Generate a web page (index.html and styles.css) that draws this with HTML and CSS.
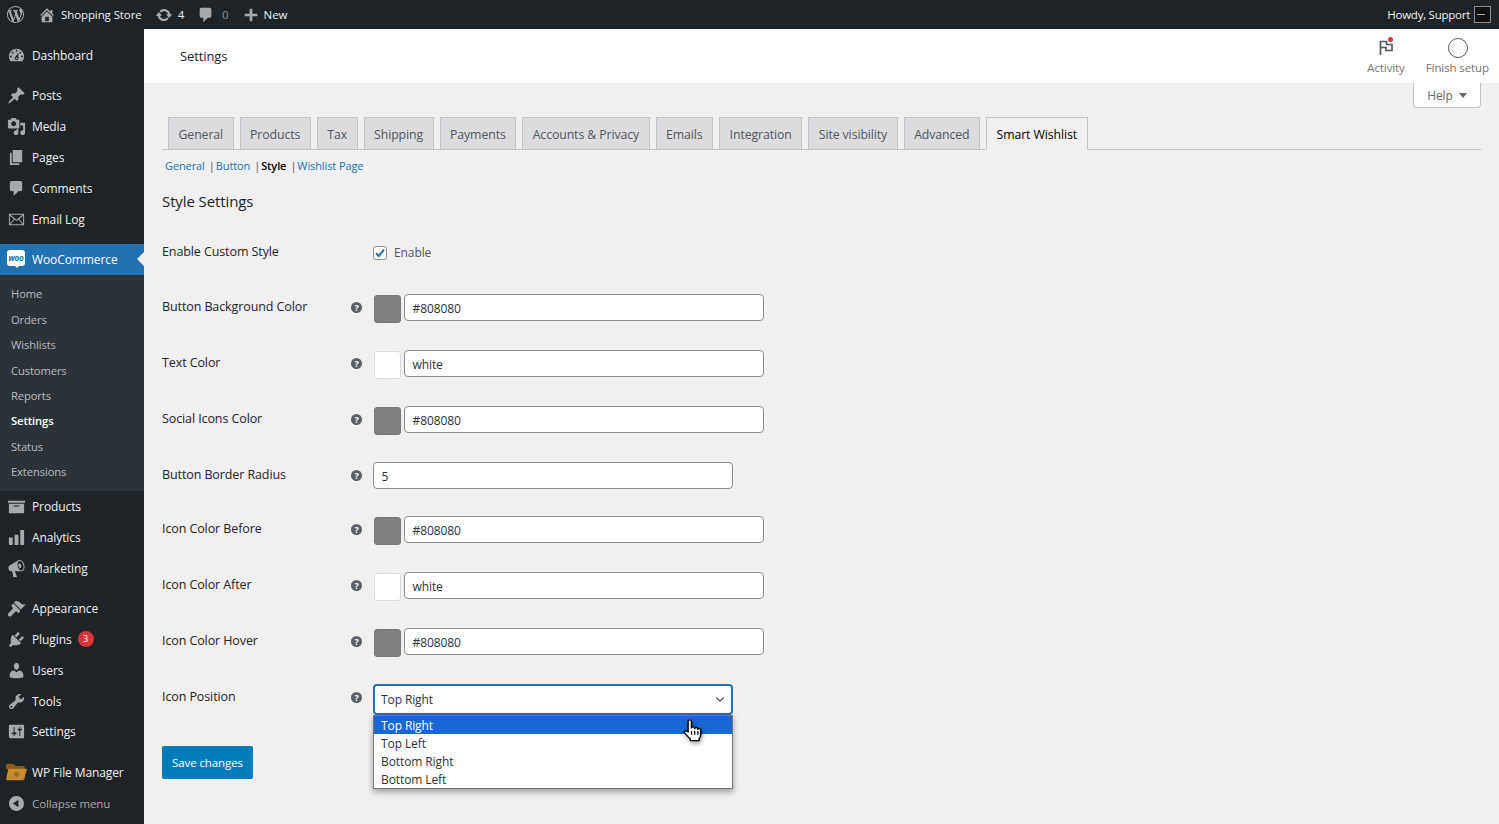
FILE: index.html
```html
<!DOCTYPE html>
<html lang="en">
<head>
    <meta charset="UTF-8">
    <meta name="viewport" content="width=device-width, initial-scale=1.0">
    <title>Settings</title>
    <link rel="stylesheet" href="styles.css">
</head>
<body>
    <div class="adminbar">
        <div class="bar-left">
            <svg class="bar-logo" viewBox="0 0 20 20"><path d="M20 10c0-5.51-4.49-10-10-10C4.48 0 0 4.49 0 10c0 5.52 4.48 10 10 10 5.51 0 10-4.48 10-10zM7.78 15.37L4.37 6.22c.55-.02 1.17-.08 1.17-.08.5-.06.44-1.13-.06-1.11 0 0-1.45.11-2.37.11-.18 0-.37 0-.58-.01C4.12 2.69 6.87 1.11 10 1.11c2.33 0 4.45.87 6.05 2.34-.68-.11-1.65.39-1.65 1.58 0 .74.45 1.36.9 2.1.35.61.55 1.36.55 2.46 0 1.49-1.4 5-1.4 5l-3.03-8.37c.54-.02.82-.17.82-.17.5-.05.44-1.25-.06-1.22 0 0-1.44.12-2.38.12-.87 0-2.33-.12-2.33-.12-.5-.03-.56 1.2-.06 1.22l.92.08 1.26 3.41zM17.41 10c.24-.64.74-1.87.43-4.25.7 1.29 1.05 2.71 1.05 4.25 0 3.29-1.73 6.24-4.4 7.78.97-2.59 1.94-5.2 2.92-7.78zM6.1 18.09C3.12 16.65 1.11 13.53 1.11 10c0-1.3.23-2.48.72-3.59C3.25 10.3 4.67 14.2 6.1 18.09zm4.03-6.63l2.58 6.98c-.86.29-1.76.45-2.71.45-.79 0-1.57-.11-2.29-.33.81-2.38 1.62-4.74 2.42-7.1z"/></svg>
            <svg class="bar-icon home" viewBox="0 0 20 20"><path d="M16 8.5l1.53 1.53-1.06 1.06L10 4.62l-6.47 6.47-1.06-1.06L10 2.5l4 4v-2h2v4zm-6-2.46l6 5.99V18H4v-5.97zM12 17v-5H8v5h4z"/></svg>
            <span class="bar-text store">Shopping Store</span>
            <svg class="bar-icon update" viewBox="0 0 20 20"><path d="M10.2 3.28c3.53 0 6.43 2.61 6.92 6h2.08l-3.5 4-3.5-4h2.32c-.45-1.97-2.21-3.45-4.32-3.45-1.45 0-2.73.71-3.54 1.78L4.95 5.66C6.23 4.2 8.11 3.28 10.2 3.28zm-.4 13.44c-3.52 0-6.43-2.61-6.92-6H.8l3.5-4c1.17 1.33 2.33 2.67 3.5 4H5.48c.45 1.97 2.21 3.45 4.32 3.45 1.45 0 2.73-.71 3.54-1.78l1.71 1.95c-1.28 1.46-3.15 2.38-5.25 2.38z"/></svg>
            <span class="bar-text count">4</span>
            <svg class="bar-icon bubble" viewBox="0 0 20 20"><path d="M5 2h9c1.1 0 2 .9 2 2v7c0 1.1-.9 2-2 2h-2l-5 5v-5H5c-1.1 0-2-.9-2-2V4c0-1.1.9-2 2-2z"/></svg>
            <span class="bar-text zero">0</span>
            <svg class="bar-icon plus" viewBox="0 0 20 20"><path d="M17 8.5v3h-5.5V17h-3v-5.5H3v-3h5.500V3h3v5.500z"/></svg>
            <span class="bar-text">New</span>
        </div>
        <div class="bar-right">
            <span class="bar-text howdy">Howdy, Support</span>
            <span class="avatar"><i></i></span>
        </div>
    </div>

    <div class="layout">
        <div class="sidebar">
            <div class="menu-group">
                <div class="menu-item"><svg viewBox="0 0 20 20"><path d="M3.76 16h12.48c1.1-1.37 1.76-3.11 1.76-5 0-4.42-3.58-8-8-8s-8 3.58-8 8c0 1.89.66 3.63 1.76 5zM10 4c.55 0 1 .45 1 1s-.45 1-1 1-1-.45-1-1 .45-1 1-1zM6 6c.55 0 1 .45 1 1s-.45 1-1 1-1-.45-1-1 .45-1 1-1zm8 0c.55 0 1 .45 1 1s-.45 1-1 1-1-.45-1-1 .45-1 1-1zm-5.37 5.55L12 7v6c0 1.1-.9 2-2 2s-2-.9-2-2c0-.57.24-1.08.63-1.45zM4 10c.55 0 1 .45 1 1s-.45 1-1 1-1-.45-1-1 .45-1 1-1zm12 0c.55 0 1 .45 1 1s-.45 1-1 1-1-.45-1-1 .45-1 1-1zm-5 3c0-.55-.45-1-1-1s-1 .45-1 1 .45 1 1 1 1-.45 1-1z"/></svg>Dashboard</div>
            </div>
            <div class="menu-group">
                <div class="menu-item"><svg viewBox="0 0 20 20"><path d="M10.44 3.02l1.82-1.82 6.36 6.35-1.83 1.82c-1.05-.68-2.48-.57-3.41.36l-.75.75c-.92.93-1.04 2.35-.35 3.41l-1.83 1.82-2.41-2.41-2.8 2.79c-.42.42-3.38 2.71-3.8 2.29s1.86-3.39 2.28-3.81l2.79-2.79L4.1 9.36l1.83-1.82c1.05.69 2.48.57 3.4-.36l.75-.75c.93-.92 1.05-2.35.36-3.41z"/></svg>Posts</div>
                <div class="menu-item"><svg viewBox="0 0 20 20"><path d="M13 11V4c0-.55-.45-1-1-1h-1.67L9 1H5L3.67 3H2c-.55 0-1 .45-1 1v7c0 .55.45 1 1 1h10c.55 0 1-.45 1-1zM7 4.5c1.38 0 2.5 1.12 2.5 2.5S8.38 9.5 7 9.5 4.5 8.38 4.5 7 5.62 4.5 7 4.5zM14 6h5v10.5c0 1.38-1.12 2.5-2.5 2.5S14 17.88 14 16.5s1.12-2.5 2.5-2.5c.17 0 .34.02.5.05V9h-3V6zm-4 8.05V13h2v3.5c0 1.38-1.12 2.5-2.5 2.5S7 17.88 7 16.5 8.12 14 9.5 14c.17 0 .34.02.5.05z"/></svg>Media</div>
                <div class="menu-item"><svg viewBox="0 0 20 20"><path d="M6 15V2h10v13H6zm-1 1h8v2H3V5h2v11z"/></svg>Pages</div>
                <div class="menu-item"><svg viewBox="0 0 20 20"><path d="M5 2h9c1.1 0 2 .9 2 2v7c0 1.1-.9 2-2 2h-2l-5 5v-5H5c-1.1 0-2-.9-2-2V4c0-1.1.9-2 2-2z"/></svg>Comments</div>
                <div class="menu-item"><svg viewBox="0 0 20 20"><path d="M2 4h16v12H2V4zm1.6 1l6.4 5.2L16.4 5H3.6zM3 6v8.6L7.2 9.4 3 6zm14 0l-4.2 3.4 4.2 5.2V6zM8 10l-4.2 5h12.4L12 10l-2 1.6L8 10z"/></svg>Email Log</div>
            </div>
            <div class="menu-group">
                <div class="menu-item current">
                    <span class="woo-icon">woo</span>WooCommerce
                </div>
                <div class="submenu">
                    <div>Home</div>
                    <div>Orders</div>
                    <div>Wishlists</div>
                    <div>Customers</div>
                    <div>Reports</div>
                    <div class="sub-current">Settings</div>
                    <div>Status</div>
                    <div>Extensions</div>
                </div>
                <div class="menu-item"><svg viewBox="0 0 20 20"><path d="M19 4v2H1V4h18zM2 7h16v10H2V7zm11 3V9H7v1h6z"/></svg>Products</div>
                <div class="menu-item"><svg viewBox="0 0 20 20"><path d="M18 18V2h-4v16h4zm-6 0V7H8v11h4zm-6 0v-8H2v8h4z"/></svg>Analytics</div>
                <div class="menu-item"><svg viewBox="0 0 20 20"><path d="M18.15 5.94c.46 1.62.38 3.22-.02 4.48-.42 1.28-1.26 2.18-2.3 2.48-.16.06-.26.06-.4.06-.06.02-.12.02-.18.02-.06.02-.14.02-.22.02h-6.8l2.22 5.5c.02.14-.06.26-.14.34-.08.1-.24.16-.34.16H6.95c-.1 0-.26-.06-.34-.16-.08-.08-.16-.2-.14-.34l-1-5.5H4.25l-.02-.02c-.5.06-1.08-.18-1.54-.62s-.88-1.08-1.06-1.88c-.24-.8-.2-1.56-.02-2.2.18-.62.58-1.08 1.06-1.3l.02-.02 9-5.4c.1-.06.18-.1.24-.16.06-.04.14-.08.24-.12.16-.08.28-.12.5-.18 1.04-.3 2.24.1 3.22.98s1.84 2.24 2.26 3.86zm-2.58 5.98h-.02c.4-.1.74-.34 1.04-.7.58-.7.86-1.76.86-3.04-.02-.64-.1-1.3-.28-1.98-.34-1.36-1.02-2.5-1.78-3.24s-1.68-1.1-2.46-.88c-.82.22-1.4.96-1.7 2-.32 1.04-.28 2.36.06 3.72.38 1.36 1 2.5 1.8 3.24.78.74 1.62 1.1 2.48.88zm-2.54-7.08c.22-.04.42-.02.62.04.38.16.76.48 1.02 1s.42 1.2.42 1.78c0 .3-.04.56-.12.8-.18.48-.44.84-.86.94-.34.1-.8-.06-1.14-.4-.36-.34-.7-.86-.88-1.46-.34-1.24 0-2.44.94-2.7z"/></svg>Marketing</div>
            </div>
            <div class="menu-group">
                <div class="menu-item"><svg viewBox="0 0 20 20"><path d="M14.48 11.06L7.41 3.99l1.5-1.5c.5-.56 2.3-.47 3.51.32 1.21.8 1.43 1.28 2.91 2.1 1.18.64 2.45 1.26 4.45.85zM13.77 11.77L6.7 4.7 4.93 6.47c-.39.39-.39 1.02 0 1.41l1.06 1.06c.39.39.39 1.03 0 1.42L1.5 15c-.8.8-.8 2 0 2.8s2 .8 2.8 0l4.6-4.5c.39-.39 1.03-.39 1.42 0l1.06 1.06c.39.39 1.02.39 1.41 0z"/></svg>Appearance</div>
                <div class="menu-item"><svg viewBox="0 0 20 20"><path d="M13.11 4.36L9.87 7.6 8 5.73l3.24-3.24c.35-.34 1.05-.2 1.56.32.52.51.66 1.21.31 1.55zm-8 1.77l.91-1.12 9.01 9.01-1.19.84c-.71.71-2.63 1.16-3.82 1.16H6.14L4.9 17.26c-.59.59-1.54.59-2.12 0-.59-.58-.59-1.53 0-2.12l1.24-1.24v-3.88c0-1.13.4-3.19 1.09-3.89zm7.26 3.97l3.24-3.24c.34-.35 1.04-.21 1.55.31.52.51.66 1.21.31 1.55l-3.24 3.25z"/></svg>Plugins<span class="badge">3</span></div>
                <div class="menu-item"><svg viewBox="0 0 20 20"><path d="M10 9.25c-2.27 0-2.73-3.44-2.73-3.44C7 4.02 7.82 2 9.97 2c2.16 0 2.98 2.02 2.71 3.81 0 0-.41 3.44-2.68 3.44zm0 2.57L12.72 10c2.39 0 4.52 2.33 4.52 4.53v2.49s-3.65 1.13-7.24 1.13c-3.65 0-7.24-1.13-7.24-1.13v-2.49c0-2.25 1.94-4.48 4.47-4.48z"/></svg>Users</div>
                <div class="menu-item"><svg viewBox="0 0 20 20"><path d="M16.68 9.77c-1.34 1.34-3.3 1.67-4.95.99l-5.41 6.52c-.99.99-2.59.99-3.58 0s-.99-2.59 0-3.57l6.52-5.42c-.68-1.65-.35-3.61.99-4.95 1.28-1.28 3.12-1.62 4.72-1.06l-2.89 2.89 2.82 2.82 2.86-2.87c.53 1.58.18 3.39-1.08 4.65zM3.81 16.21c.4.39 1.04.39 1.43 0 .4-.4.4-1.04 0-1.43-.39-.4-1.03-.4-1.43 0-.39.39-.39 1.03 0 1.43z"/></svg>Tools</div>
                <div class="menu-item"><svg viewBox="0 0 20 20"><path d="M18 16V4c0-.55-.45-1-1-1H3c-.55 0-1 .45-1 1v12c0 .55.45 1 1 1h14c.55 0 1-.45 1-1zM8 11h1c.55 0 1 .45 1 1s-.45 1-1 1H8v1.5c0 .28-.22.5-.5.5s-.5-.22-.5-.5V13H6c-.55 0-1-.45-1-1s.45-1 1-1h1V5.5c0-.28.22-.5.5-.5s.5.22.5.5V11zm5-2h-1c-.55 0-1-.45-1-1s.45-1 1-1h1V5.5c0-.28.22-.5.5-.5s.5.22.5.5V7h1c.55 0 1 .45 1 1s-.45 1-1 1h-1v5.5c0 .28-.22.5-.5.5s-.5-.22-.5-.5V9z"/></svg>Settings</div>
            </div>
            <div class="menu-group">
                <div class="menu-item">
                    <svg class="folder" viewBox="0 0 22 18"><path fill="#8a5a1c" d="M0 2c0-1 .6-1.6 1.6-1.6h6L10 2.6h8c1 0 1.6.6 1.6 1.6V6H0z"/><path fill="#c78a2c" d="M2.4 5.6H22l-2.8 10.6c-.2.8-.8 1.4-1.7 1.4H1.2C.4 17.6 0 17 .2 16.2z"/><circle cx="11" cy="11.6" r="2.6" fill="#9a6a24"/></svg>WP File Manager
                </div>
                <div class="menu-item collapse"><svg viewBox="0 0 20 20"><path d="M10 2.16c4.33 0 7.84 3.51 7.84 7.84s-3.51 7.84-7.84 7.84S2.16 14.33 2.16 10 5.71 2.16 10 2.16zm2 11.72V6.12L6.18 9.97z"/></svg><span class="collapse-text">Collapse menu</span></div>
            </div>
        </div>

        <div class="main">
            <div class="page-header">
                <div class="page-title">Settings</div>
                <div class="header-actions">
                    <div class="header-action">
                        <span class="flag-wrap">
                            <svg viewBox="0 0 20 20"><path fill="none" stroke="#50575e" stroke-width="1.7" d="M4.5 18V4.5h6v3h5.500v6h-6v-3H4.500"/></svg>
                            <i class="flag-dot"></i>
                        </span>
                        <span>Activity</span>
                    </div>
                    <div class="header-action">
                        <span class="ring"></span>
                        <span>Finish setup</span>
                    </div>
                </div>
            </div>

            <div class="content">
                <div class="help-row">
                    <div class="help-tab">Help<i></i></div>
                </div>

                <div class="tabs">
                    <a>General</a>
                    <a>Products</a>
                    <a>Tax</a>
                    <a>Shipping</a>
                    <a>Payments</a>
                    <a>Accounts &amp; Privacy</a>
                    <a>Emails</a>
                    <a>Integration</a>
                    <a>Site visibility</a>
                    <a>Advanced</a>
                    <a class="active">Smart Wishlist</a>
                </div>

                <div class="subnav">
                    <a>General</a><span class="sep">|</span>
                    <a>Button</a><span class="sep">|</span>
                    <a class="on">Style</a><span class="sep">|</span>
                    <a>Wishlist Page</a>
                </div>

                <h2 class="section-title">Style Settings</h2>

                <div class="form-row row-check">
                    <div class="row-label">Enable Custom Style</div>
                    <div></div>
                    <label class="check-label">
                        <span class="checkbox"><svg viewBox="0 0 14 14"><path fill="none" stroke="#2271b1" stroke-width="2" d="M3 7.2l2.8 2.8L11 3.6"/></svg></span>
                        Enable
                    </label>
                </div>

                <div class="form-row">
                    <div class="row-label">Button Background Color</div>
                    <span class="tip">?</span>
                    <div class="color-field"><span class="swatch gray"></span><span class="text-input">#808080</span></div>
                </div>
                <div class="form-row">
                    <div class="row-label">Text Color</div>
                    <span class="tip">?</span>
                    <div class="color-field"><span class="swatch"></span><span class="text-input">white</span></div>
                </div>
                <div class="form-row">
                    <div class="row-label">Social Icons Color</div>
                    <span class="tip">?</span>
                    <div class="color-field"><span class="swatch gray"></span><span class="text-input">#808080</span></div>
                </div>
                <div class="form-row row-short">
                    <div class="row-label">Button Border Radius</div>
                    <span class="tip">?</span>
                    <span class="text-input number">5</span>
                </div>
                <div class="form-row">
                    <div class="row-label">Icon Color Before</div>
                    <span class="tip">?</span>
                    <div class="color-field"><span class="swatch gray"></span><span class="text-input">#808080</span></div>
                </div>
                <div class="form-row">
                    <div class="row-label">Icon Color After</div>
                    <span class="tip">?</span>
                    <div class="color-field"><span class="swatch"></span><span class="text-input">white</span></div>
                </div>
                <div class="form-row">
                    <div class="row-label">Icon Color Hover</div>
                    <span class="tip">?</span>
                    <div class="color-field"><span class="swatch gray"></span><span class="text-input">#808080</span></div>
                </div>
                <div class="form-row row-select">
                    <div class="row-label">Icon Position</div>
                    <span class="tip">?</span>
                    <div class="select-wrap">
                        <div class="select-box">Top Right
                            <svg viewBox="0 0 12 8"><path fill="none" stroke="#50575e" stroke-width="1.6" d="M1.5 1.5L6 6l4.5-4.5"/></svg>
                        </div>
                        <div class="select-list">
                            <div class="selected">Top Right</div>
                            <div>Top Left</div>
                            <div>Bottom Right</div>
                            <div>Bottom Left</div>
                        </div>
                        <svg class="hand" viewBox="0 0 18 26" preserveAspectRatio="none"><path fill="#fff" stroke="#000" stroke-width="1.2" stroke-linejoin="round" d="M5 2.400c0-1.800 2.700-1.800 2.700 0v7.200c.1-1.500 2.500-1.500 2.600 0v.8c.1-1.400 2.500-1.400 2.600 0v1c.1-1.300 2.500-1.300 2.500.2v5.200c0 2-.5 3-1.400 4.400v2.200H6.800v-2c-1.500-1.600-3.300-4-4.600-6.200-1-1.800 1-3 2.200-1.600L5 14z"/><path fill="none" stroke="#000" d="M7.800 13v4M10.400 13v4M13 13v4"/></svg>
                    </div>
                </div>

                <button class="save-btn">Save changes</button>
            </div>
        </div>
    </div>
</body>
</html>
```

FILE: styles.css
```css
* {
    box-sizing: border-box;
}
html, body {
    margin: 0;
    height: 824px;
    overflow: hidden;
}
body {
    font-family: "Open Sans", "Noto Sans", sans-serif;
    font-size: 12px;
    letter-spacing: -0.1px;
    color: #1d2327;
    background-color: #f0f0f1;
}
svg {
    fill: currentColor;
    display: block;
}

/* Top bar */
.adminbar {
    height: 29px;
    background-color: #1d2327;
    color: #f0f0f1;
    font-size: 11.5px;
    display: flex;
    justify-content: space-between;
    align-items: center;
    padding: 0 8px 0 7px;
}
.bar-left, .bar-right {
    display: flex;
    align-items: center;
}
.bar-logo {
    width: 17px;
    height: 17px;
    margin-right: 14px;
    color: #a7aaad;
}
.bar-icon {
    width: 18px;
    height: 18px;
    color: #a7aaad;
}
.bar-icon.home {
    margin-right: 5px;
}
.bar-text.store {
    margin-right: 13px;
}
.bar-icon.update {
    margin-right: 5px;
}
.bar-text.count {
    margin-right: 13px;
}
.bar-icon.bubble {
    margin-right: 7px;
}
.bar-text.zero {
    color: #8c8f94;
    margin-right: 13px;
}
.bar-icon.plus {
    margin-right: 4px;
}
.bar-text.howdy {
    letter-spacing: -0.25px;
}
.avatar {
    width: 17px;
    height: 17px;
    margin-left: 4px;
    border: 1px solid #8c8f94;
    background-color: #111;
    display: flex;
    align-items: center;
    padding-left: 2px;
}
.avatar i {
    width: 8px;
    height: 1px;
    background-color: #a7aaad;
}

.layout {
    display: flex;
    height: 795px;
}

/* Sidebar */
.sidebar {
    width: 144px;
    flex-shrink: 0;
    background-color: #1d2327;
    color: #f0f0f1;
    padding-top: 11px;
}
.menu-group {
    margin-bottom: 9.5px;
}
.menu-item {
    height: 30.85px;
    display: flex;
    align-items: center;
    padding-left: 32px;
    position: relative;
}
.menu-item svg {
    position: absolute;
    left: 7px;
    top: 6px;
    width: 19px;
    height: 19px;
    color: #a7aaad;
}
.menu-item svg.folder {
    left: 6px;
    width: 21px;
    height: 18px;
}
.menu-item.current {
    background-color: #2271b1;
    color: #fff;
}
.menu-item.current::after {
    content: "";
    position: absolute;
    right: 0;
    top: 8px;
    border: 7px solid transparent;
    border-right-color: #f0f0f1;
    border-left-width: 0;
}
.menu-item.collapse {
    color: #a7aaad;
}
.collapse-text {
    font-size: 11.5px;
}
.woo-icon {
    position: absolute;
    left: 7px;
    top: 6px;
    width: 18px;
    height: 16px;
    background-color: #fff;
    border-radius: 3px;
    color: #2271b1;
    font-size: 8px;
    font-weight: 700;
    font-style: italic;
    line-height: 15px;
    text-align: center;
    letter-spacing: -0.3px;
}
.woo-icon::after {
    content: "";
    position: absolute;
    left: 7px;
    top: 15px;
    border: 3px solid transparent;
    border-top-color: #fff;
    border-bottom-width: 0;
}
.badge {
    width: 16px;
    height: 16px;
    margin-left: 6px;
    border-radius: 50%;
    background-color: #d63638;
    color: #fff;
    font-size: 9px;
    line-height: 16px;
    text-align: center;
}
.submenu {
    background-color: #2c3338;
    padding: 6.5px 0;
    color: rgba(240, 246, 252, 0.7);
    font-size: 11.2px;
}
.submenu div {
    height: 25.4px;
    line-height: 25.4px;
    padding-left: 11px;
}
.submenu .sub-current {
    color: #fff;
    font-weight: 600;
}

/* Page header */
.main {
    flex: 1;
    min-width: 0;
}
.page-header {
    height: 54px;
    background-color: #fff;
    display: flex;
    justify-content: space-between;
    align-items: center;
    padding: 0 10px 0 36px;
}
.page-title {
    font-size: 13px;
}
.header-actions {
    display: flex;
    gap: 21px;
}
.header-action {
    display: flex;
    flex-direction: column;
    align-items: center;
    gap: 3px;
    font-size: 11.5px;
    color: #757575;
}
.flag-wrap {
    position: relative;
    width: 20px;
    height: 20px;
    display: block;
}
.flag-wrap svg {
    width: 20px;
    height: 20px;
}
.flag-dot {
    position: absolute;
    top: 0;
    right: 3px;
    width: 5px;
    height: 5px;
    border-radius: 50%;
    background-color: #d63638;
}
.ring {
    width: 20px;
    height: 20px;
    margin: 1px 0 -1px 1px;
    border: 1.5px solid #50575e;
    border-radius: 50%;
}

/* Content */
.content {
    padding: 0 18px;
}
.help-row {
    display: flex;
    justify-content: flex-end;
}
.help-tab {
    width: 68px;
    height: 25px;
    background-color: #fff;
    border: 1px solid #c3c4c7;
    border-top: none;
    border-radius: 0 0 4px 4px;
    color: #646970;
    display: flex;
    align-items: center;
    justify-content: center;
    gap: 6px;
}
.help-tab i {
    border: 4px solid transparent;
    border-top: 5px solid #646970;
    border-bottom-width: 0;
}
.tabs {
    margin-top: 9px;
    padding-left: 6px;
    height: 33px;
    display: flex;
    gap: 6px;
    border-bottom: 1px solid #c3c4c7;
}
.tabs a {
    height: 33px;
    padding: 0 9.5px;
    background-color: #dcdcde;
    border: 1px solid #c3c4c7;
    color: #50575e;
    font-size: 12.3px;
    font-weight: 400;
    line-height: 33px;
}
.tabs a.active {
    background-color: #f0f0f1;
    border-bottom-color: #f0f0f1;
    color: #000;
    font-weight: 500;
}
.subnav {
    height: 30px;
    padding-left: 3px;
    display: flex;
    align-items: center;
    font-size: 11px;
    color: #2271b1;
}
.subnav .sep {
    color: #50575e;
    margin: 0 1px 0 4px;
}
.subnav a.on {
    color: #000;
    font-weight: 600;
}
.section-title {
    margin: 0;
    height: 59px;
    padding-top: 9px;
    font-size: 15px;
    line-height: 24px;
    font-weight: 500;
}

/* Form rows */
.form-row {
    display: grid;
    grid-template-columns: 189px 22px 1fr;
    height: 56px;
}
.row-check {
    height: 55px;
}
.row-short {
    height: 54px;
}
.row-select {
    height: 62px;
}
.row-label {
    font-size: 12.5px;
    font-weight: 500;
    line-height: 25px;
}
.tip {
    width: 11px;
    height: 11px;
    margin-top: 8px;
    border-radius: 50%;
    background-color: #5c6066;
    color: #fff;
    font-size: 9px;
    font-weight: 700;
    line-height: 11px;
    text-align: center;
}
.check-label {
    display: flex;
    align-items: center;
    gap: 7px;
    height: 27px;
    color: #50575e;
}
.checkbox {
    width: 14px;
    height: 14px;
    background-color: #fff;
    border: 1px solid #8c8f94;
    border-radius: 3px;
    position: relative;
}
.checkbox svg {
    position: absolute;
    left: -1px;
    top: -1px;
    width: 14px;
    height: 14px;
}
.color-field {
    display: flex;
    align-items: flex-start;
    gap: 3px;
    padding-left: 1px;
}
.swatch {
    width: 27px;
    height: 28px;
    margin-top: 1px;
    border: 1px solid #dcdcde;
    border-radius: 3px;
    background-color: #fff;
}
.swatch.gray {
    background-color: #808080;
    border-color: #77797b;
}
.text-input {
    display: block;
    width: 360px;
    height: 27px;
    padding: 0 7.5px;
    line-height: 27px;
    background-color: #fff;
    border: 1px solid #8c8f94;
    border-radius: 4px;
    color: #2c3338;
}
.select-wrap {
    position: relative;
    width: 360px;
}
.select-box {
    height: 31px;
    padding: 0 6px;
    line-height: 27px;
    background-color: #fff;
    border: 2px solid #2271b1;
    border-radius: 4px;
    color: #2c3338;
}
.select-box svg {
    position: absolute;
    right: 8px;
    top: 12px;
    width: 10px;
    height: 7px;
}
.select-list {
    position: absolute;
    left: 0;
    top: 31px;
    width: 360px;
    background-color: #fff;
    border: 1px solid #767676;
    box-shadow: 0 3px 6px rgba(0, 0, 0, 0.35);
    color: #2c3338;
    z-index: 5;
}
.select-list div {
    height: 18px;
    line-height: 20px;
    padding-left: 7px;
}
.select-list .selected {
    background-color: #1967d2;
    color: #fff;
}
.hand {
    position: absolute;
    left: 309px;
    top: 35px;
    width: 22px;
    height: 24px;
    z-index: 6;
    filter: drop-shadow(1px 2px 2px rgba(0, 0, 0, 0.4));
}
.save-btn {
    display: block;
    width: 91px;
    height: 33px;
    padding: 0;
    border: none;
    border-radius: 2px;
    background-color: #007cba;
    color: #fff;
    font-family: inherit;
    font-size: 11.5px;
    letter-spacing: -0.1px;
}
```
